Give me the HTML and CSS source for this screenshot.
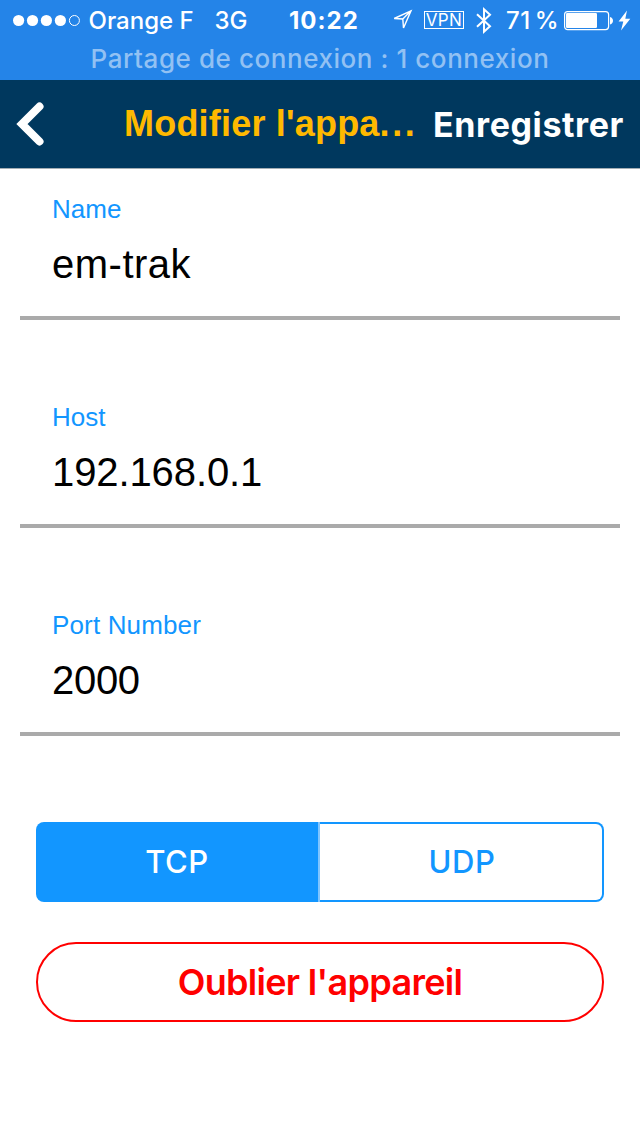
FILE: index.html
```html
<!DOCTYPE html>
<html lang="fr">
<head>
<meta charset="utf-8">
<title>Modifier l'appareil</title>
<link rel="stylesheet" href="styles.css">
</head>
<body>
<header class="status">
  <div class="status-row">
    <svg class="icon" width="68" height="40" viewBox="0 0 68 40" fill="#fff"><circle cx="5.6" cy="20.5" r="5.6"/><circle cx="19.5" cy="20.5" r="5.6"/><circle cx="33.4" cy="20.5" r="5.6"/><circle cx="47.4" cy="20.5" r="5.6"/><circle cx="61.4" cy="20.5" r="5" fill="none" stroke="#fff"/></svg>
    <span class="carrier">Orange F</span>
    <span class="network">3G</span>
    <span class="clock">10:22</span>
    <svg class="icon" width="22" height="40" viewBox="0 0 22 40" fill="none" stroke="#fff" stroke-width="1.4"><path d="M2.200 18.500 19 10.800 11.500 28 10.800 19Z M10.800 19 19 10.800"/></svg>
    <span class="vpn">VPN</span>
    <svg class="icon" width="18" height="40" viewBox="0 0 18 40" fill="none" stroke="#fff" stroke-width="2"><path d="M1 14.200 14 26.200 8 31.700V9.300L14 14.800 1 26.800"/></svg>
    <span class="percent">71 %</span>
    <svg class="icon" width="52" height="40" viewBox="0 0 52 40"><rect x=".6" y="11.600" width="44" height="18" rx="3" fill="none" stroke="#fff" stroke-width="1.200"/><rect x="2" y="13" width="31" height="15" rx="1.200" fill="#fff"/><path d="M46 17c4 1 4 6.500 0 7.500z" fill="#fff"/></svg>
    <svg class="icon" width="14" height="40" viewBox="0 0 14 40"><path d="M9 10.500.6 21.500H5.300L3 30.500 12.300 18.800H7.300Z" fill="#fff"/></svg>
  </div>
  <div class="sharing"><span>Partage de connexion : 1 connexion</span></div>
</header>
<nav class="navbar">
  <svg class="back" width="32" height="88" viewBox="0 0 32 88" fill="none" stroke="#fff" stroke-width="8" stroke-linecap="round"><path d="M24.500 26.500 7 44 24.500 61.500"/></svg>
  <h1 class="title">Modifier l'appa<span class="ellipsis">...</span></h1>
  <span class="save">Enregistrer</span>
</nav>
<main>
  <section class="field"><label class="label">Name</label><div class="value name">em-trak</div></section>
  <section class="field"><label class="label">Host</label><div class="value host">192.168.0.1</div></section>
  <section class="field"><label class="label port">Port Number</label><div class="value digits">2000</div></section>
  <div class="segments">
    <div class="segment active"><span>TCP</span></div>
    <div class="segment other"><span>UDP</span></div>
  </div>
  <div class="forget"><span>Oublier l'appareil</span></div>
</main>
</body>
</html>
```
FILE: styles.css
```css
* { box-sizing: border-box; }
body { margin: 0; width: 640px; height: 1136px; background: #fff; font-family: Inter, sans-serif; overflow: hidden; }
svg { display: block; }
.status { height: 80px; background: #2484e8; color: #fff; }
.status-row { display: grid; grid-template-columns: 75.5px 126px 74.5px 103px 32px 52px 30px 58px 54px 1fr; grid-template-rows: 40px; align-items: center; height: 40px; padding-left: 13px; font-size: 24px; line-height: 42px; white-space: nowrap; }
.status-row > svg:first-child { margin-left: -.5px; }
.carrier, .network, .clock, .percent { height: 40px; }
.carrier { font-weight: 500; }
.network { font-weight: 500; }
.clock { font-weight: 700; letter-spacing: 1px; }
.vpn { width: 40px; height: 18px; border: 1px solid #fff; font-size: 17px; line-height: 17px; text-align: center; letter-spacing: .3px; }
.percent { font-weight: 500; word-spacing: -3px; letter-spacing: .6px; }
.sharing { height: 40px; text-align: center; font-size: 26px; font-weight: 500; line-height: 38px; letter-spacing: .56px; color: #92c1f3; white-space: nowrap; }
.navbar { display: flex; height: 89px; padding-left: 15px; background: #00385e; border-bottom: 1px solid #a3adb4; white-space: nowrap; }
.title { margin: 0 0 0 77px; width: 309px; font: bold 36px/88px "Liberation Sans", sans-serif; letter-spacing: .2px; color: #ffb900; }
.ellipsis { letter-spacing: 2.6px; }
.save { color: #fff; font-size: 34px; font-weight: 700; line-height: 89px; letter-spacing: .6px; }
main { padding: 0 20px; }
.field { height: 208px; padding: 24px 32px 0; font-family: "Liberation Sans", sans-serif; }
.label { display: block; height: 32px; color: #1296ff; font-size: 26px; line-height: 32px; }
.port { letter-spacing: .15px; }
.value { height: 95px; margin: 0 -32px; padding: 14px 32px 0; border-bottom: 4px solid #aaa; font-size: 40px; line-height: 50px; color: #000; }
.name { letter-spacing: .5px; }
.host { letter-spacing: -.1px; }
.digits { letter-spacing: -.3px; }
.segments { display: flex; height: 80px; margin: 29px 16px 0; }
.segment { flex: 1; text-align: center; color: #1296ff; font-size: 31px; font-weight: 500; line-height: 80px; letter-spacing: .6px; }
.active { flex: 0 0 284px; background: #1296ff; color: #fff; border-right: 2px solid #80c5ff; border-radius: 8px 0 0 8px; }
.other { border: 2px solid #1296ff; border-left: 0; border-radius: 0 8px 8px 0; line-height: 76px; padding-left: 2px; }
.forget { height: 80px; margin: 40px 16px 0; border: 2px solid #f00; border-radius: 40px; color: #f00; text-align: center; font-size: 36px; font-weight: 600; line-height: 76px; letter-spacing: -.7px; }
```
